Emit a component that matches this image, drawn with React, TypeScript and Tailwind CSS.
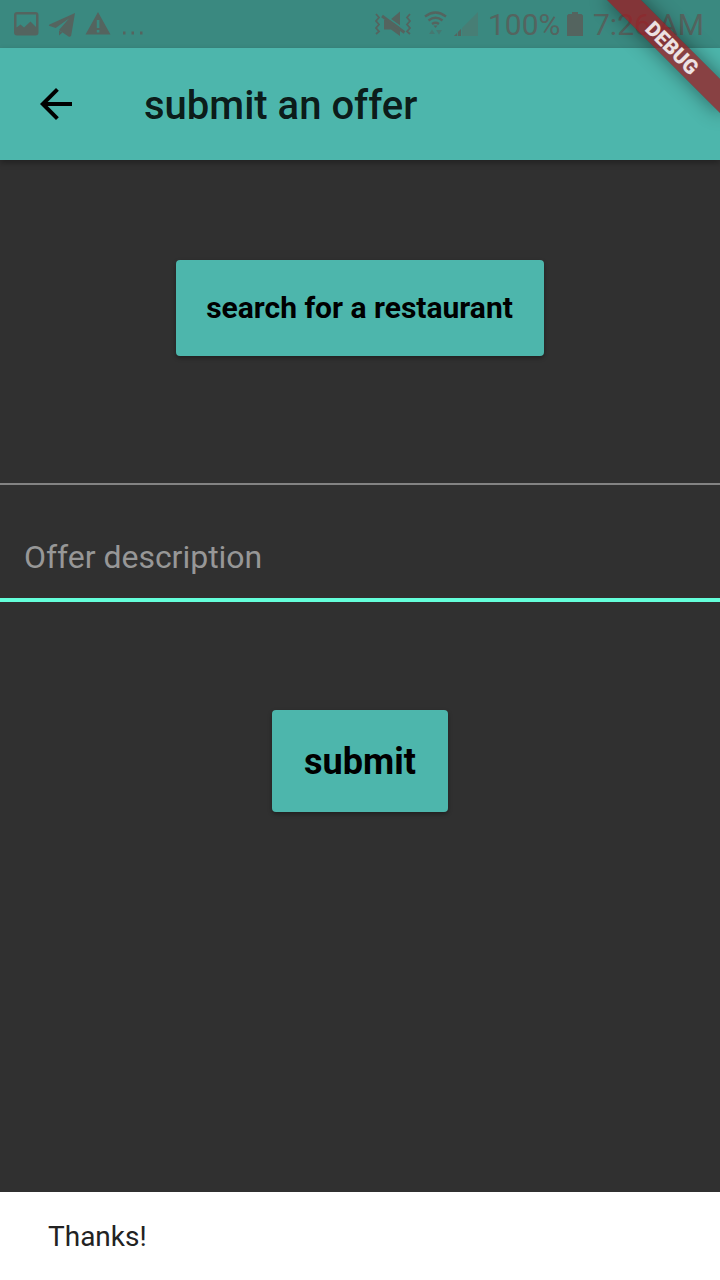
import type { ReactNode } from "react";

function StatusBar() {
  return (
    <div className="flex h-12 items-center justify-between bg-[#3a8980] text-[#54645f]">
      <svg width="160" height="48" viewBox="0 0 160 48" fill="currentColor">
        <path
          fillRule="evenodd"
          d="M17 12h18.500a3 3 0 0 1 3 3v17.500a3 3 0 0 1-3 3H17a3 3 0 0 1-3-3V15a3 3 0 0 1 3-3zM16.500 14.500v13l4-3 3.500 3 6.500-6 5.500 5.500V14.500z"
        />
        <path d="M75 13 49.500 24.500c-1 .6-.6 1.300.2 1.600l6 2L69 18.500 59 30l9.500 6.500c1.500.5 2.500 0 2.800-1.500z" />
        <path d="M59 30.500v5l3.500-3z" />
        <path
          fillRule="evenodd"
          d="M98 12 110.500 34.500H85.500zM96.800 20v8h2.600v-8zM96.800 30v2.500h2.600V30z"
        />
        <path d="M123 31.500h2.500v3H123zM131.500 31.500h2.500v3h-2.500zM140 31.500h2.500v3H140z" />
      </svg>

      <div className="flex items-center pr-4">
        <svg width="115" height="48" viewBox="372 0 115 48" fill="currentColor" className="mr-px">
          <path d="M384 20h6l10-8.500V36l-9-6.500h-7z" />
          <path d="M384 15 403 28.500" stroke="#3a8980" strokeWidth="1.600" />
          <path d="M382 16 404.500 32.500" stroke="currentColor" strokeWidth="2.800" />
          <path
            d="m376 14 3 3.500-3 3.500 3 3.500-3 3.500 3 3.500-3 2.500M410 14l-3 3.500 3 3.500-3 3.500 3 3.500-3 3.500 3 2.500"
            fill="none"
            stroke="currentColor"
            strokeWidth="1.800"
          />
          <g fill="none" stroke="currentColor" strokeWidth="2.300">
            <path d="M425 16.500q10.500-8 21 0" />
            <path d="M428.500 20.500q7-5.500 14 0" />
            <path d="M432 24q3.500-2.500 7 0" />
          </g>
          <path d="M433.500 25.500h4l-2 2.500z" />
          <path d="m429 34 3-4.500 3 4.500zM436 30h6l-3 4.500z" opacity=".45" />
          <path d="M454 36 478 12v24z" fill="#477e75" />
          <path d="m454 36 7-7v7z" />
          <path d="M457.500 30v6M461.500 28v8" stroke="#3a8980" strokeWidth=".8" />
        </svg>
        <span className="w-[72px] pt-0.5 text-[30px] leading-[46px] whitespace-nowrap">100%</span>
        <svg width="16" height="48" viewBox="0 0 16 48" fill="currentColor" className="ml-[7px]">
          <path d="M5 12h6v2h3.500L16 15.500V36H0V15.500L1.500 14H5z" />
        </svg>
        <span className="ml-2.5 w-[111px] pt-0.5 text-[30px] leading-[46px] whitespace-nowrap">7:26 AM</span>
      </div>
    </div>
  );
}

function AppBar({ title }: { title: string }) {
  return (
    <header className="flex h-28 items-center bg-[#4db6ac] pl-8 shadow-[0_3px_6px_rgba(0,0,0,0.3)]">
      <button aria-label="Back" className="mr-16">
        <svg width="48" height="48" viewBox="0 0 24 24">
          <path d="M20 11H7.830l5.590-5.590L12 4l-8 8 8 8 1.410-1.410L7.830 13H20v-2z" />
        </svg>
      </button>
      <h1 className="pt-1 text-[40px] leading-[48px] font-medium text-black/87">{title}</h1>
    </header>
  );
}

function RaisedButton({ className, children }: { className: string; children: ReactNode }) {
  return (
    <button
      className={`flex items-center justify-center rounded-[4px] bg-[#4db6ac] font-bold whitespace-nowrap text-black shadow-[0_2px_4px_rgba(0,0,0,0.35)] ${className}`}
    >
      {children}
    </button>
  );
}

function DebugBanner() {
  return (
    <div className="pointer-events-none absolute top-0 right-0 h-40 w-40 overflow-hidden">
      <div className="absolute top-[36px] left-[32px] flex h-6 w-40 rotate-45 items-center justify-center bg-[#9c1a20]/75 text-[20.400px] leading-6 font-black text-white/85 shadow-[0_0_20px_rgba(0,0,0,0.45)]">
        DEBUG
      </div>
    </div>
  );
}

export default function App() {
  return (
    <div className="relative flex h-[1280px] w-[720px] flex-col overflow-hidden bg-[#303030] font-['Roboto',sans-serif]">
      <StatusBar />
      <AppBar title="submit an offer" />

      <main className="flex flex-1 flex-col items-center pt-[100px]">
        <RaisedButton className="h-24 w-[368px] pr-px pb-0.5 text-[30px]">search for a restaurant</RaisedButton>
        <div className="mt-[127px] h-0.5 w-full bg-[#838383]" />
        <label className="flex h-[117px] w-full items-center border-b-4 border-[#64ffda] px-6 pt-[30px] text-[32px] tracking-[-0.03px] text-[#979797]">
          Offer description
        </label>
        <RaisedButton className="mt-[108px] h-[102px] w-44 pt-0.5 text-[36px]">submit</RaisedButton>
      </main>

      <footer className="flex h-[88px] items-center bg-white px-12 pt-0.5 text-[28px] text-[#222222]">
        Thanks!
      </footer>

      <DebugBanner />
    </div>
  );
}
